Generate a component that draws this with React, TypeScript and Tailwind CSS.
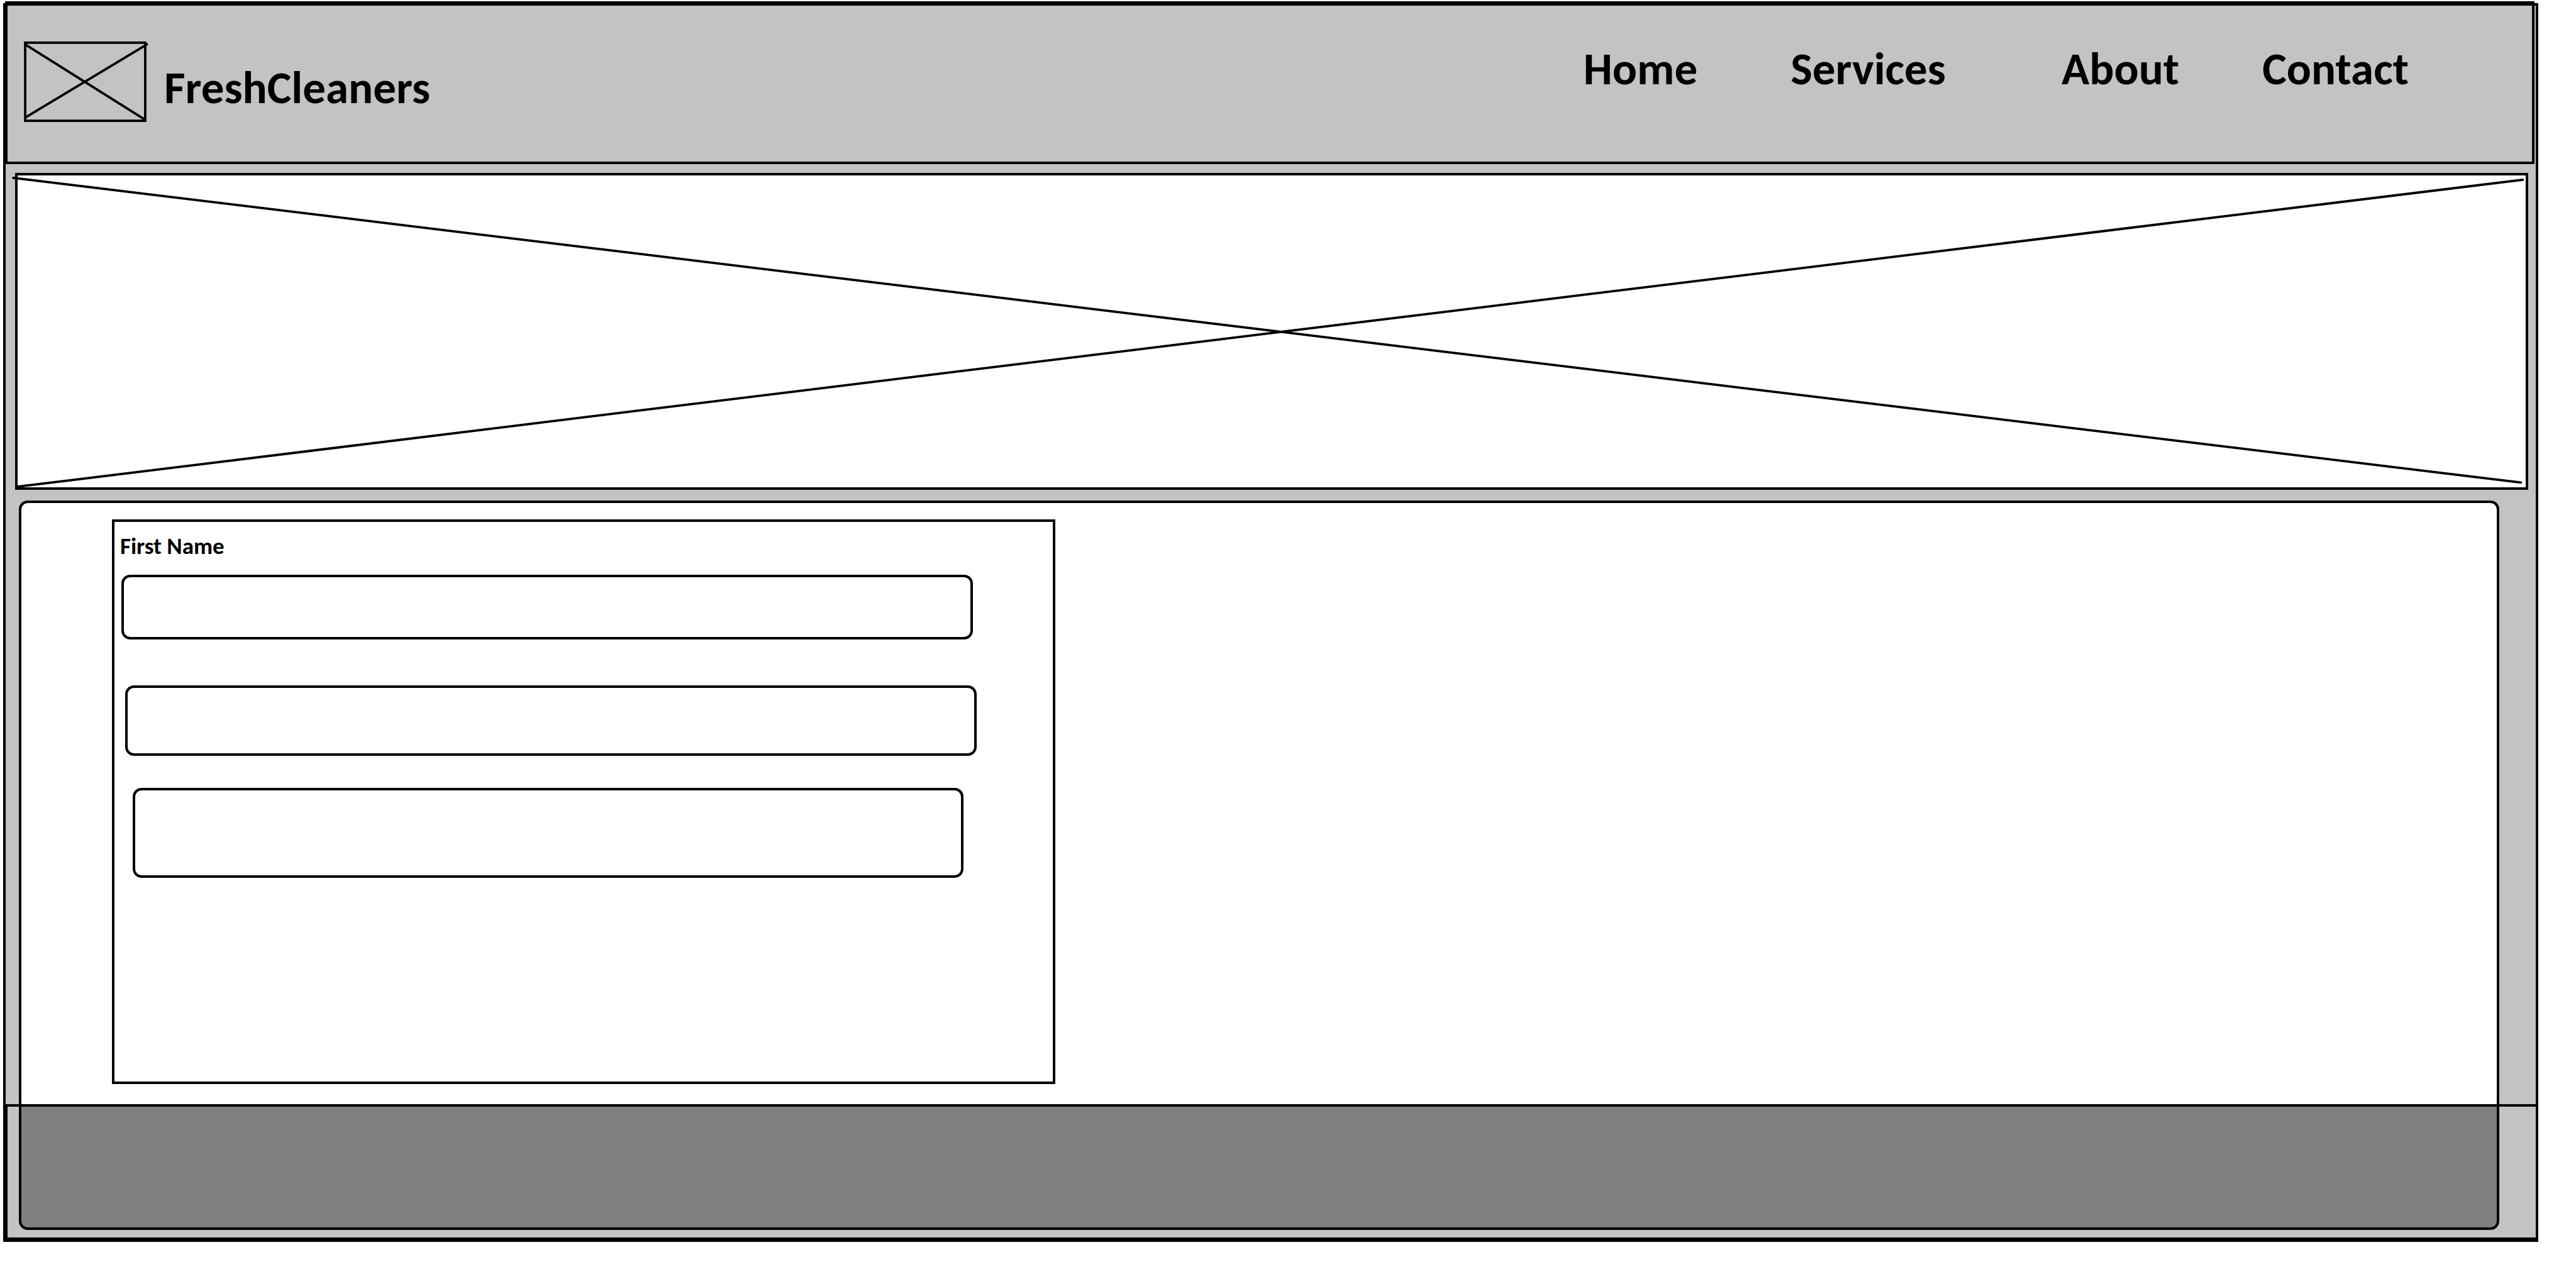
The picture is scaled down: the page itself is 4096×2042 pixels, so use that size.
function LogoPlaceholder() {
  return (
    <svg
      viewBox="51 87 257 169"
      className="block h-[128px] w-[195px] shrink-0 overflow-visible"
      fill="none"
      stroke="#000"
      strokeWidth="5"
      strokeLinecap="round"
      role="img"
      aria-label="Logo placeholder"
    >
      <rect x="53.5" y="89.5" width="252" height="164" strokeLinecap="butt" />
      <path d="M55 94 303 250M55 246 309 93" />
    </svg>
  );
}

function Header() {
  return (
    <header className="-mt-[7px] mr-[2px] -ml-px flex h-[259px] items-start justify-between border-4 border-t-[7px] border-black bg-[#c3c3c3] pr-[196px] pl-[26px]">
      <a href="#" className="mt-[57px] flex items-start gap-[28px]">
        <LogoPlaceholder />
        <span className="mt-[31px] text-[73px] leading-[84px] font-bold">FreshCleaners</span>
      </a>
      <nav className="mt-[58px] flex text-[73px] leading-[84px] font-bold">
        <a href="#" className="mr-[148px]">Home</a>
        <a href="#" className="mr-[184px]">Services</a>
        <a href="#" className="mr-[132px]">About</a>
        <a href="#">Contact</a>
      </nav>
    </header>
  );
}

function Banner() {
  return (
    <section className="mt-[14px] mr-[12px] ml-[15px] h-[504px] border-4 border-black bg-white">
      <svg
        viewBox="36 368 5267 655"
        preserveAspectRatio="none"
        className="block h-full w-full overflow-visible"
        fill="none"
        stroke="#000"
        strokeWidth="5"
        strokeLinecap="round"
        role="img"
        aria-label="Banner placeholder"
      >
        <path d="M27 373 5293 1013M34 1022 5297 377" />
      </svg>
    </section>
  );
}

function ContactForm() {
  return (
    <form className="flex flex-col border-4 border-black pb-[324px]">
      <label htmlFor="first-name" className="mt-[19px] ml-[9px] text-[37px] leading-[40px] font-bold">
        First Name
      </label>
      <input
        id="first-name"
        type="text"
        className="mt-[25px] mr-[127px] ml-[11px] h-[103px] rounded-[14px] border-4 border-black px-6 text-[37px]"
      />
      <input
        type="text"
        aria-label="Last name"
        className="mt-[73px] mr-[121px] ml-[17px] h-[112px] rounded-[14px] border-4 border-black px-6 text-[37px]"
      />
      <textarea
        aria-label="Message"
        className="mt-[51px] mr-[142px] ml-[29px] h-[143px] resize-none rounded-[14px] border-4 border-black px-6 text-[37px]"
      />
    </form>
  );
}

export default function App() {
  return (
    <div className="bg-white pt-[5px] pr-[60px] pb-[67px] pl-[5px] font-[Carlito,Lato,sans-serif] text-black">
      <div className="flex flex-col border-4 border-b-[7px] border-black bg-[#c3c3c3]">
        <Header />
        <Banner />
        <main className="mt-[17px] mr-[58px] ml-[21px] grid grid-cols-[1500fr_2292fr] rounded-t-[14px] border-4 border-b-0 border-black bg-white pt-[26px] pb-[32px] pl-[144px]">
          <ContactForm />
        </main>
        <footer className="-ml-px border-t-4 border-l-4 border-black pr-[58px] pb-[12px] pl-[18px]">
          <div className="h-[196px] rounded-b-[14px] border-4 border-t-0 border-black bg-[#7f7f7f]" />
        </footer>
      </div>
    </div>
  );
}
